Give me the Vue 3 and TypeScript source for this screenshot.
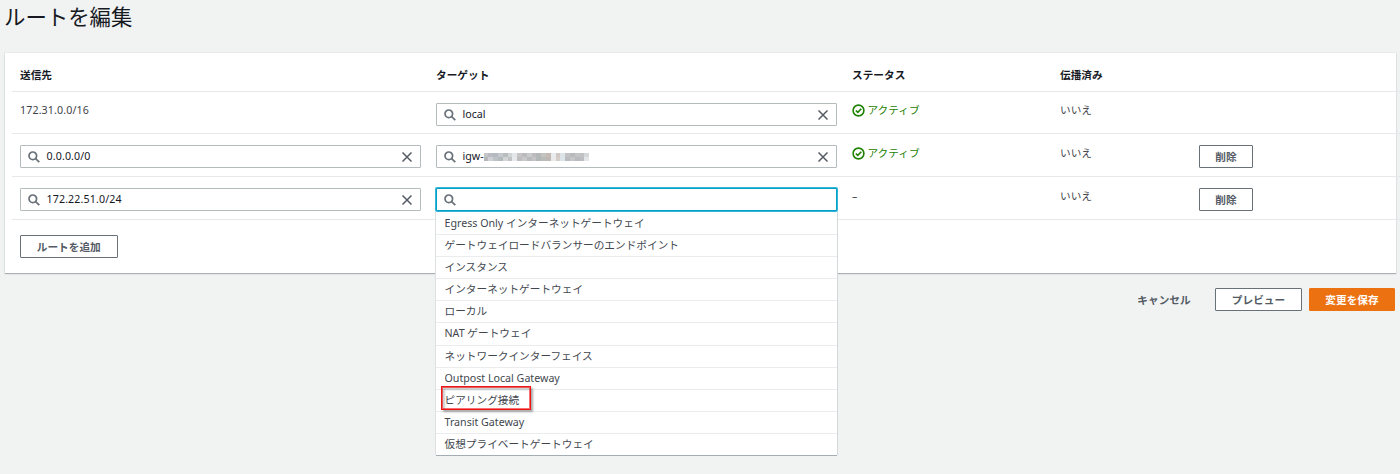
<script setup lang="ts">
import { ref } from 'vue'

interface Route {
  destination: string
  fixed?: boolean
  target: string
  masked?: boolean
  open?: boolean
  active: boolean
  propagated: string
}

const routes = ref<Route[]>([
  { destination: '172.31.0.0/16', fixed: true, target: 'local', active: true, propagated: 'いいえ' },
  { destination: '0.0.0.0/0', target: 'igw-', masked: true, active: true, propagated: 'いいえ' },
  { destination: '172.22.51.0/24', target: '', open: true, active: false, propagated: 'いいえ' },
])

const headers = ['送信先', 'ターゲット', 'ステータス', '伝播済み', '']

const options = [
  'Egress Only インターネットゲートウェイ',
  'ゲートウェイロードバランサーのエンドポイント',
  'インスタンス',
  'インターネットゲートウェイ',
  'ローカル',
  'NAT ゲートウェイ',
  'ネットワークインターフェイス',
  'Outpost Local Gateway',
  'ピアリング接続',
  'Transit Gateway',
  '仮想プライベートゲートウェイ',
]
const marked = 'ピアリング接続'

// Two rows of mosaic cells hiding the gateway id
const mosaic = [
  '#c4c6c8', '#b9bcc2', '#b5bac0', '#c3c9cc', '#b8bdc0', '#d2d5d6', '#e3e6e8', '#c6c4c6', '#b9bbbc',
  '#c9cacb', '#bcbcc0', '#b3b7b8', '#c3c4c2', '#c4bcb4', '#e9ecee', '#cfc8c4', '#dde4e8', '#c0c2c4',
  '#b8bbbd', '#c3c5c8', '#c1c2c3', '#d3d8da',
  '#b5b7ba', '#cfd1d5', '#bcc3c8', '#b5bbbd', '#d2d4d6', '#c1c3c4', '#e6eaec', '#bebdbd', '#c9c9c9',
  '#b8babc', '#c5c3c4', '#b2b6b7', '#b9bcb9', '#bfb7b4', '#e8eaec', '#d6cec8', '#dce5ea', '#b9bbbc',
  '#c4c6c9', '#b8babd', '#bdbec2', '#e4e7e8',
]
</script>

<template>
  <main class="page">
    <h1 class="title">ルートを編集</h1>
    <section class="card">
      <div class="row head">
        <div v-for="(h, i) in headers" :key="i" class="cell">{{ h }}</div>
      </div>
      <div v-for="r in routes" :key="r.destination" class="row body">
        <div class="cell">
          <span v-if="r.fixed" class="text address">{{ r.destination }}</span>
          <div v-else class="field">
            <svg class="lens" viewBox="0 0 12 12"><circle cx="4.8" cy="4.8" r="3.8" /><path d="M7.6 7.6 11.3 11.2" /></svg>
            <span class="value address">{{ r.destination }}</span>
            <svg class="clear" viewBox="0 0 10 10"><path d="M.5.5l9 9M9.5.5l-9 9" /></svg>
          </div>
        </div>
        <div class="cell">
          <div class="field" :class="{ focus: r.open }">
            <svg class="lens" viewBox="0 0 12 12"><circle cx="4.8" cy="4.8" r="3.8" /><path d="M7.6 7.6 11.3 11.2" /></svg>
            <span class="value">{{ r.target }}</span>
            <span v-if="r.masked" class="mosaic">
              <i v-for="(c, i) in mosaic" :key="i" :style="{ background: c }" />
            </span>
            <svg v-if="!r.open" class="clear" viewBox="0 0 10 10"><path d="M.5.5l9 9M9.5.5l-9 9" /></svg>
            <ul v-if="r.open" class="menu">
              <li v-for="o in options" :key="o">
                {{ o }}<span v-if="o === marked" class="mark" />
              </li>
            </ul>
          </div>
        </div>
        <div class="cell">
          <span v-if="r.active" class="text status">
            <svg class="check" viewBox="0 0 13 13"><circle cx="6.5" cy="6.5" r="5.4" /><path d="M3.8 6.5l2 1.9 3.5-3.6" /></svg>アクティブ</span>
          <span v-else class="text">–</span>
        </div>
        <div class="cell"><span class="text">{{ r.propagated }}</span></div>
        <div class="cell"><button v-if="!r.fixed" class="btn remove">削除</button></div>
      </div>
      <button class="btn add">ルートを追加</button>
    </section>
    <footer class="actions">
      <button class="btn link">キャンセル</button>
      <button class="btn preview">プレビュー</button>
      <button class="btn primary">変更を保存</button>
    </footer>
  </main>
</template>

<style>
html,
body {
  margin: 0;
  background: #f1f3f3;
  overflow: hidden;
}
</style>

<style scoped>
.page {
  box-sizing: border-box;
  width: 1400px;
  height: 474px;
  background: #f1f3f3;
  color: #16191f;
  font: 10.67px/16px "Noto Sans", "Noto Sans CJK JP", sans-serif;
}
.title {
  margin: 0;
  padding: 2px 0 0 4px;
  height: 51px;
  font-size: 21.4px;
  line-height: 29px;
  font-weight: 400;
}
.card {
  box-sizing: border-box;
  width: 1391px;
  height: 220px;
  margin-left: 5px;
  padding-left: 7px;
  background: #fff;
  box-shadow: 0 1px 1px #a9b1b4, 0 0 1px 1px #e8ebeb;
}
.row {
  box-sizing: border-box;
  display: grid;
  grid-template-columns: 416px 416px 208px 139px 1fr;
  width: 1388px;
  border-bottom: 1px solid #e6e9e9;
}
.head {
  height: 39px;
  font-weight: 700;
}
.head .cell {
  padding-top: 14px;
}
.body {
  height: 43px;
}
.body:nth-child(2) {
  height: 42px;
}
.body:nth-child(2) .text {
  margin-top: -1px;
}
.cell {
  box-sizing: border-box;
  padding: 11px 7px 0 8px;
}
.text {
  display: flex;
  height: 16px;
  color: #3f444b;
}
.address {
  letter-spacing: 0.12px;
}
.field {
  position: relative;
  box-sizing: border-box;
  display: flex;
  align-items: center;
  width: 401px;
  height: 23px;
  padding: 0 8px 0 7px;
  border: 1px solid #b4bcbe;
  border-radius: 1px;
  background: #fff;
}
.value {
  margin-top: -1px;
}
.focus {
  border-color: #00a1c9;
  box-shadow: 0 0 0 1px #35b4d3;
}
.lens {
  width: 12px;
  height: 12px;
  margin-right: 6.5px;
  fill: none;
  stroke: #687078;
  stroke-width: 1.7;
}
.clear {
  width: 10px;
  height: 10px;
  margin-left: auto;
  fill: none;
  stroke: #545b64;
  stroke-width: 1.5;
}
.mosaic {
  display: grid;
  grid-template-columns: repeat(22, 4.8px);
  grid-auto-rows: 4px;
}
.status {
  align-items: center;
  gap: 2.5px;
  color: #1d8102;
}
.check {
  width: 13px;
  height: 13px;
  fill: none;
  stroke: #1d8102;
  stroke-width: 1.6;
}
.menu {
  position: absolute;
  z-index: 2;
  top: 23px;
  left: -1px;
  box-sizing: border-box;
  width: 401px;
  margin: 0;
  padding: 1px 0 0;
  list-style: none;
  background: #fff;
  box-shadow: 1px 0 0 #d3d8da, -1px 0 0 #dce0e1, 0 1px 0 #a5adb4;
}
.menu li {
  position: relative;
  box-sizing: border-box;
  height: 22.1px;
  padding-left: 8.5px;
  line-height: 21px;
  color: #42474e;
  border-bottom: 1px solid #eaeded;
}
.menu li:last-child {
  height: 21.5px;
  border-bottom: 0;
}
.mark {
  position: absolute;
  box-sizing: border-box;
  left: 5px;
  top: -4px;
  width: 90px;
  height: 24px;
  border: 1px solid #f01414;
  box-shadow: 2px 2px 2px #0005, inset 0 0 0 1px #f0141499, inset 3px 3px 2px #0003;
}
.btn {
  box-sizing: border-box;
  height: 23px;
  padding: 0;
  border: 1px solid #687078;
  border-radius: 1px;
  background: #fff;
  color: #545b64;
  font: 700 10.67px/20px "Noto Sans", "Noto Sans CJK JP", sans-serif;
}
.remove {
  display: block;
  width: 54px;
}
.add {
  display: block;
  width: 97.5px;
  margin: 15px 0 0 8px;
}
.actions {
  display: flex;
  justify-content: flex-end;
  margin: 15px 5px 0 0;
}
.link {
  width: 86px;
  margin-right: 8px;
  border-color: transparent;
  background: transparent;
}
.preview {
  width: 87px;
  margin-right: 7px;
}
.primary {
  width: 86px;
  border-color: #ec7211;
  background: #ec7211;
  color: #fff;
}
</style>
